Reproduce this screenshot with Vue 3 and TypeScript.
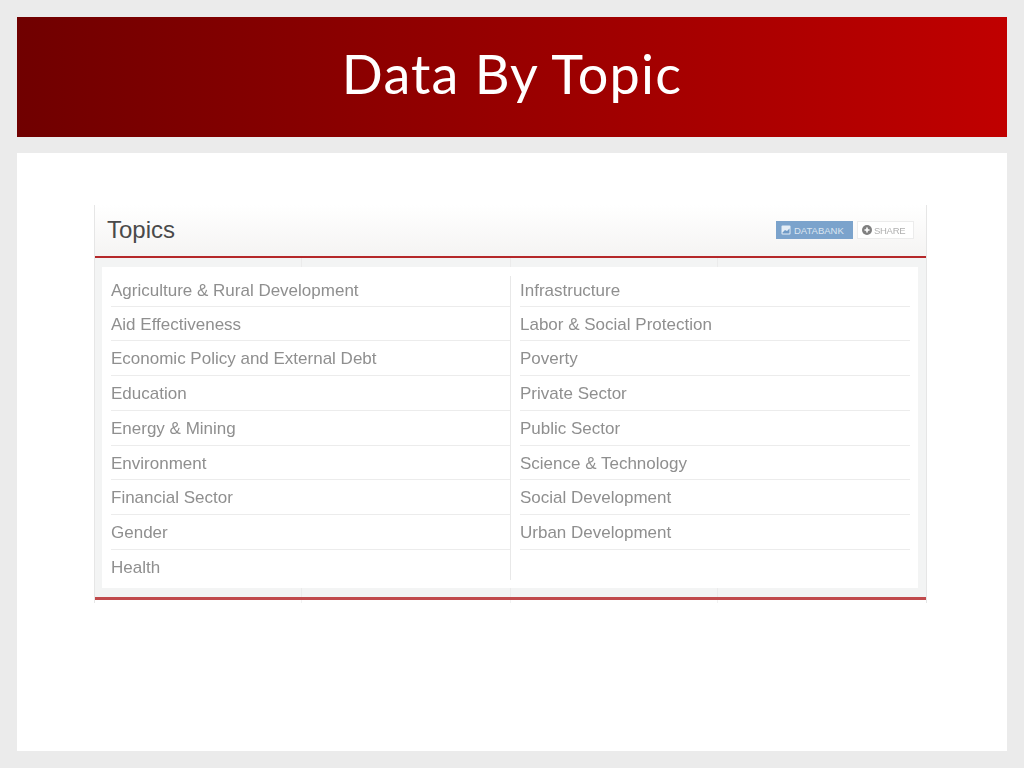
<script setup lang="ts">
const left: string[] = [
  'Agriculture & Rural Development',
  'Aid Effectiveness',
  'Economic Policy and External Debt',
  'Education',
  'Energy & Mining',
  'Environment',
  'Financial Sector',
  'Gender',
  'Health',
]
const right: string[] = [
  'Infrastructure',
  'Labor & Social Protection',
  'Poverty',
  'Private Sector',
  'Public Sector',
  'Science & Technology',
  'Social Development',
  'Urban Development',
]
</script>

<template>
  <div class="slide">
    <header class="banner">
      <h1>Data By Topic</h1>
    </header>
    <main class="card">
      <section class="panel">
        <div class="panel-head">
          <h2>Topics</h2>
          <div class="actions">
            <span class="btn primary">
              <svg width="10" height="10" viewBox="0 0 10 10">
                <rect x="0.5" y="0.5" width="9" height="9" rx="1" fill="#e4edf6" />
                <path d="M1.5 7.5 L4 5 L6 6 L8.5 3.5 V8.5 H1.5 Z" fill="#6f9ac6" />
              </svg>
              DATABANK
            </span>
            <span class="btn plain">
              <svg width="10" height="10" viewBox="0 0 10 10">
                <circle cx="5" cy="5" r="5" fill="#808080" />
                <path d="M5 2.5 V7.5 M2.5 5 H7.5" stroke="#fff" stroke-width="1.6" />
              </svg>
              SHARE
            </span>
          </div>
        </div>
        <div class="panel-body">
          <div class="columns">
            <ul class="col col-left">
              <li v-for="item in left" :key="item">{{ item }}</li>
            </ul>
            <ul class="col col-right">
              <li v-for="item in right" :key="item">{{ item }}</li>
            </ul>
          </div>
        </div>
        <div class="panel-foot"></div>
      </section>
    </main>
  </div>
</template>

<style>
html, body { margin: 0; background: #ebebeb; }
</style>

<style scoped>
.slide {
  width: 1024px;
  height: 768px;
  box-sizing: border-box;
  padding: 17px;
  display: flex;
  flex-direction: column;
  gap: 16px;
  background: #ebebeb;
  overflow: hidden;
}
.banner {
  height: 120px;
  flex: none;
  background: linear-gradient(90deg, #700000 0%, #c00000 100%);
  display: flex;
  align-items: center;
  justify-content: center;
}
.banner h1 {
  margin: 0;
  color: #fff;
  font: 400 54px "Lato", sans-serif;
  letter-spacing: 1.2px;
  padding-bottom: 7px;
}
.card {
  height: 598px;
  flex: none;
  background: #fff;
  box-sizing: border-box;
  padding: 52px 80px 0 77px;
}
.panel {
  height: 398px;
  box-sizing: border-box;
  display: flex;
  flex-direction: column;
  border-left: 1px solid #e6e6e6;
  border-right: 1px solid #e6e6e6;
  font-family: "Liberation Sans", Arial, sans-serif;
  filter: blur(0.35px);
}
.panel-head {
  height: 53px;
  flex: none;
  box-sizing: border-box;
  border-bottom: 2px solid #b5282a;
  background: linear-gradient(180deg, #ffffff 0%, #f5f4f3 100%);
  display: flex;
  align-items: center;
  justify-content: space-between;
  padding: 0 12px 1px 12px;
}
.panel-head h2 {
  margin: 0;
  font-size: 24px;
  font-weight: 400;
  color: #4a4a4a;
}
.actions {
  display: flex;
  gap: 4px;
}
.btn {
  height: 18px;
  box-sizing: border-box;
  display: flex;
  align-items: center;
  gap: 3px;
  font-size: 9.5px;
  padding-left: 5px;
  white-space: nowrap;
}
.btn svg {
  flex: none;
}
.primary {
  width: 77px;
  background: #7ba3cc;
  color: #dbe6f1;
}
.plain {
  width: 57px;
  background: #fff;
  border: 1px solid #ececec;
  color: #b0b0b0;
  letter-spacing: -0.3px;
  padding-left: 4px;
  gap: 2px;
}
.panel-body {
  height: 342px;
  flex: none;
  box-sizing: border-box;
  border-bottom: 3px solid #c04a4c;
  background-color: #f3f4f4;
  background-image:
    linear-gradient(#ebebeb, #ebebeb),
    linear-gradient(#ebebeb, #ebebeb),
    linear-gradient(#ebebeb, #ebebeb);
  background-size: 1px 100%;
  background-repeat: no-repeat;
  background-position: 206px 0, 415px 0, 622px 0;
  padding: 9px 8px 9px 7px;
  display: flex;
}
.panel-foot {
  flex: 1;
  background-image:
    linear-gradient(#f2f2f2, #f2f2f2),
    linear-gradient(#f2f2f2, #f2f2f2),
    linear-gradient(#f2f2f2, #f2f2f2);
  background-size: 1px 100%;
  background-repeat: no-repeat;
  background-position: 206px 0, 415px 0, 622px 0;
}
.columns {
  flex: 1;
  background: #fff;
  box-sizing: border-box;
  padding: 9px 8px 8px 9px;
  display: grid;
  grid-template-columns: 400px 1fr;
}
.col {
  list-style: none;
  margin: 0;
  padding: 0;
}
.col-left {
  border-right: 1px solid #e8e8e8;
}
.col-right {
  padding-left: 9px;
}
.col li {
  height: 34.7px;
  box-sizing: border-box;
  border-bottom: 1px solid #ececec;
  color: #8f8f8f;
  font-size: 17px;
  line-height: 36px;
}
.col li:first-child {
  height: 30.8px;
  line-height: 29px;
}
.col-left li:last-child {
  height: 30.3px;
  line-height: 36px;
  border-bottom: none;
}
</style>
